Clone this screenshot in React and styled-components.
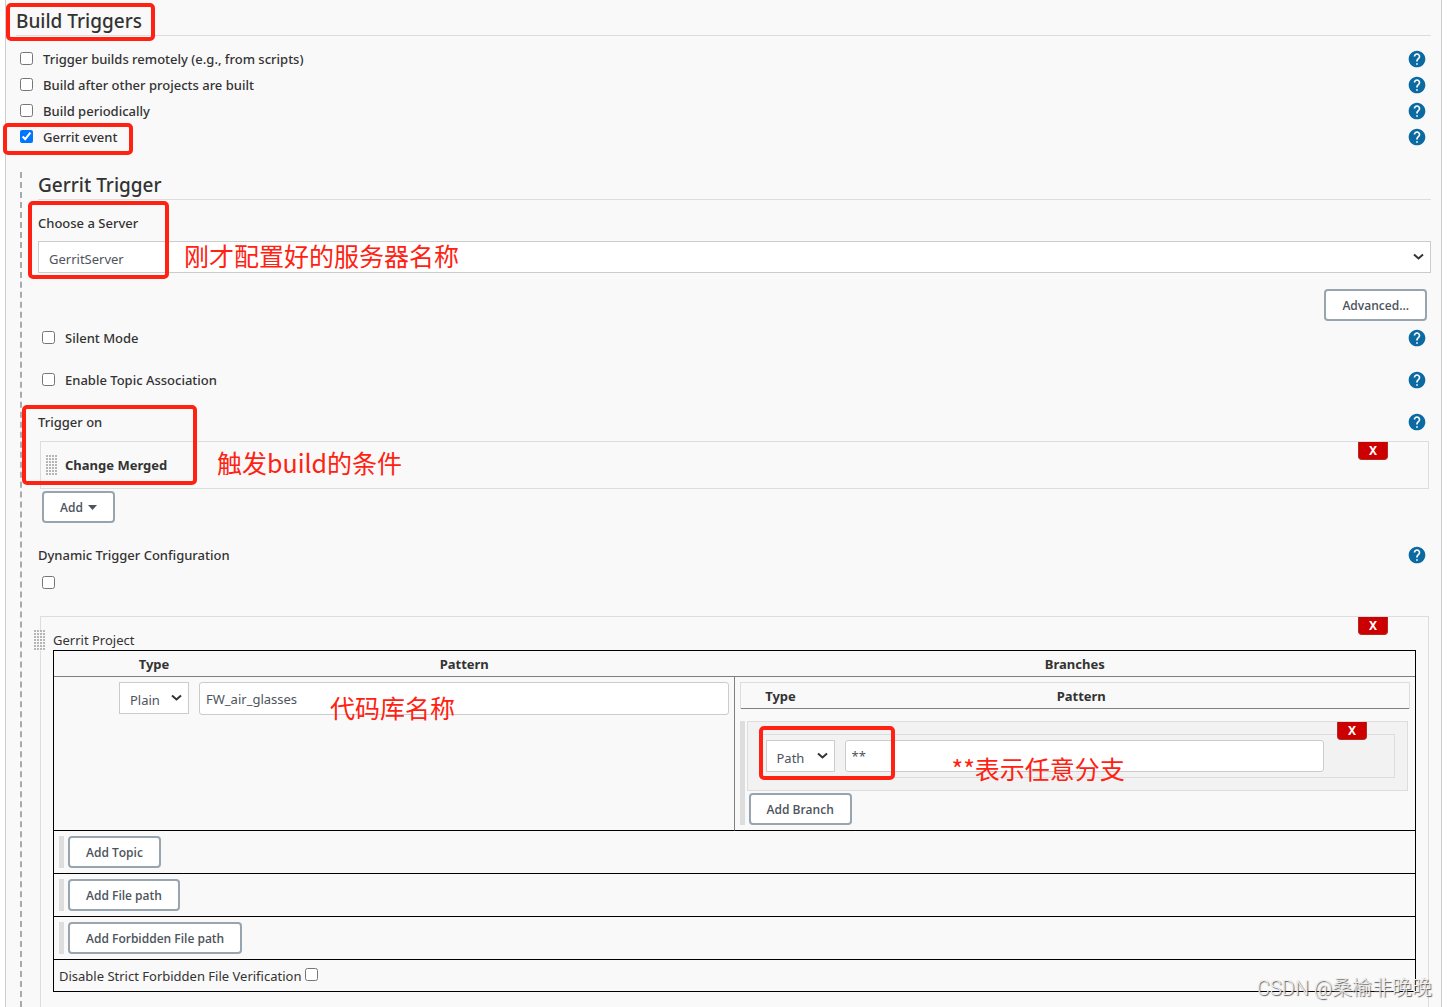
import React from "react";
import styled, { createGlobalStyle } from "styled-components";

const GlobalStyle = createGlobalStyle`
  *, *::before, *::after { box-sizing: border-box; }
  body {
    margin: 0;
    background: #fff;
    color: #333;
    font: 14px/20px "Noto Sans", "Noto Sans CJK SC", sans-serif;
  }
  input, select, button { font-family: inherit; color: inherit; margin: 0; }
`;

const Page = styled.div`
  position: relative;
  min-height: 100vh;
  display: flex;
  padding: 0 5px;
`;

const Panel = styled.main`
  flex: 1;
  display: flex;
  flex-direction: column;
  min-width: 0;
  padding: 0 10px;
  background: #f9f9f9;
  border: solid #ccc;
  border-width: 0 1px;
`;

const Heading = styled.h2`
  margin: 0;
  padding-top: ${(p) => (p.$first ? "7px" : "0")};
  border-bottom: 1px solid #ddd;
  font-size: 19px;
  line-height: ${(p) => (p.$first ? "28px" : "27px")};
  font-weight: 500;
`;

const TriggerList = styled.div`
  padding: 10px 0 22px 4px;
`;

const Row = styled.div`
  display: flex;
  align-items: center;
  justify-content: space-between;
  height: ${(p) => (p.$tall ? "24px" : "26px")};
  margin-top: ${(p) => (p.$tall ? "18px" : "0")};
  padding: 0 4px 0 ${(p) => (p.$inset ? "4px" : "0")};
`;

const Label = styled.label`
  display: flex;
  align-items: center;
  gap: 10px;
  font-size: 13px;
  line-height: 20px;
  font-weight: 500;

  input { margin-bottom: 2px; }
`;

const Check = styled.input.attrs({ type: "checkbox" })`
  width: 13px;
  height: 13px;
`;

const HelpButton = styled.button`
  display: flex;
  padding: 0 0 1px;
  border: 0;
  background: none;
  color: #0b6aa2;
`;

const Nested = styled.section`
  flex: 1;
  display: flex;
  flex-direction: column;
  margin-left: 4px;
  padding-left: 16px;
  border-left: 2px dashed #aaa;
`;

const ServerField = styled.div`
  display: flex;
  flex-direction: column;
  gap: 8px;
  padding-top: 13px;
`;

const SelectWrap = styled.div`
  position: relative;
  display: flex;
  width: ${(p) => p.$width || "100%"};
  flex: none;
`;

const SelectBox = styled.select`
  appearance: none;
  width: 100%;
  height: 32px;
  padding: 3px 24px 0 10px;
  border: 1px solid #ccc;
  border-radius: 0;
  background: #fff;
  color: #4d545d;
  font-size: 13px;
`;

const Chevron = styled.svg`
  position: absolute;
  right: 7px;
  top: 12px;
  pointer-events: none;
`;

const TextBox = styled.input.attrs({ type: "text" })`
  flex: 1;
  width: 100%;
  min-width: 0;
  height: ${(p) => (p.$low ? "32px" : "33px")};
  padding: 0 6px;
  border: 1px solid #ccc;
  border-radius: 3px;
  background: #fff;
  color: #4d545d;
  font-size: 13px;
`;

const Button = styled.button`
  display: inline-flex;
  align-items: center;
  gap: 5px;
  height: 32px;
  padding: 0 16px;
  border: 2px solid #98a5af;
  border-radius: 4px;
  background: #fff;
  color: #4d545d;
  font-family: "Open Sans", "Noto Sans", sans-serif;
  font-size: 12px;
  font-weight: 600;
  white-space: nowrap;
`;

const AdvancedBar = styled.div`
  display: flex;
  justify-content: flex-end;
  padding: 16px 4px 0;
  margin-bottom: -13px;
`;

const EventBox = styled.div`
  position: relative;
  display: flex;
  align-items: center;
  gap: 7px;
  height: 48px;
  margin: 7px 2px 2px;
  padding-left: 5px;
  border: 1px solid #ddd;
  font-size: 13px;
  font-weight: 700;
`;

const Grip = styled.span`
  width: 12px;
  height: 21px;
  background-color: #f9f9f9;
  background-image: radial-gradient(circle at 1px 1px, #aaa 0, #bbb 1px, transparent 1px);
  background-size: 3px 3px;
`;

const DeleteButton = styled.button`
  position: absolute;
  top: 0;
  right: 40px;
  width: 30px;
  height: 18px;
  padding: 0;
  border: 1px solid #b52b20;
  border-top: 0;
  border-radius: 0 0 4px 4px;
  background: #c00;
  color: #fff;
  font-size: 12px;
  line-height: 17px;
  font-weight: 700;
`;

const AddEvent = styled.div`
  padding: 0 4px;
  margin-bottom: 2px;
`;

const DynamicCheck = styled.div`
  display: flex;
  padding: 9px 4px 27px;
`;

const ProjectBox = styled.div`
  position: relative;
  flex: 1;
  margin: 0 2px;
  padding: 13px 12px 0;
  border: 1px solid #ddd;
  border-bottom: 0;
`;

const ProjectTitle = styled.div`
  display: flex;
  align-items: center;
  gap: 7px;
  height: 20px;
  margin-left: -19px;
  font-size: 13px;
`;

const ProjectTable = styled.table`
  width: 100%;
  table-layout: fixed;
  border: 1px solid #000;
  border-collapse: separate;
  border-spacing: 0;
`;

const HeadCell = styled.th`
  height: 26px;
  padding: 0;
  border-bottom: 1px solid #808080;
  font-size: 13px;
  font-weight: 700;
  text-align: center;
`;

const Cell = styled.td`
  position: relative;
  padding: 5px;
  vertical-align: top;
  border-bottom: ${(p) => (p.$last ? "0" : "1px solid #000")};
  border-right: ${(p) => (p.$divided ? "1px solid #808080" : "0")};
  font-size: 13px;
`;

const BranchTable = styled.table`
  width: 100%;
  table-layout: fixed;
  margin-bottom: 12px;
  border: 1px solid #ddd;
  border-bottom: 0;
  border-spacing: 0;
`;

const Chunk = styled.div`
  border-left: 5px solid #ddd;
  padding-left: ${(p) => (p.$branch ? "2px" : "4px")};
  padding-right: 2px;
  display: flex;
  flex-direction: column;
  align-items: flex-start;
  gap: 2px;
`;

const ChunkButton = styled.div`
  display: flex;
  padding-left: 2px;
`;

const BranchBox = styled.div`
  position: relative;
  width: 100%;
  padding: 12px;
  border: 1px solid #ddd;
  background: #f2f2f2;
`;

const BranchFields = styled.div`
  display: flex;
  gap: 10px;
  padding: 5px 70px 5px 5px;
  border: 1px solid #ddd;
`;

const StrictLabel = styled.label`
  display: flex;
  gap: 4px;
  height: 21px;
  line-height: 22px;

  input { margin-top: 3px; }
`;

const Outline = styled.div`
  position: absolute;
  left: ${(p) => p.$x}px;
  top: ${(p) => p.$y}px;
  width: ${(p) => p.$w}px;
  height: ${(p) => p.$h}px;
  border: 4px solid #ff2212;
  border-radius: 5px;
  pointer-events: none;
`;

const Note = styled.div`
  position: absolute;
  left: ${(p) => p.$x}px;
  top: ${(p) => p.$y}px;
  color: #ff2212;
  font: 400 25px/32px "Noto Sans CJK SC", sans-serif;
  white-space: nowrap;
  pointer-events: none;
`;

const Watermark = styled.div`
  position: absolute;
  right: 15px;
  bottom: 5px;
  color: #eee;
  font: 300 20px/28px Roboto, "Noto Sans CJK SC", sans-serif;
  text-shadow: 1px 1px 1px #555;
  white-space: nowrap;
`;

const Help = () => (
  <HelpButton type="button" aria-label="Help">
    <svg width="20" height="20" viewBox="0 0 24 24" fill="currentColor">
      <circle cx="12" cy="12" r="8" fill="#fff" />
      <path d="M12 2C6.48 2 2 6.48 2 12s4.48 10 10 10 10-4.48 10-10S17.52 2 12 2zm1 17h-2v-2h2v2zm2.07-7.75l-.9.92C13.45 12.9 13 13.5 13 15h-2v-.5c0-1.1.45-2.1 1.17-2.83l1.24-1.26c.37-.36.59-.86.59-1.41 0-1.1-.9-2-2-2s-2 .9-2 2H8c0-2.21 1.79-4 4-4s4 1.79 4 4c0 .88-.36 1.68-.93 2.25z" />
    </svg>
  </HelpButton>
);

const Select = ({ id, label, value, width }) => (
  <SelectWrap $width={width}>
    <SelectBox id={id} aria-label={label} defaultValue={value}>
      <option>{value}</option>
    </SelectBox>
    <Chevron width="11" height="8" viewBox="0 0 11 8" fill="none" stroke="#333" strokeWidth="2">
      <path d="M1 1.5 5.5 5.5 10 1.5" />
    </Chevron>
  </SelectWrap>
);

const CheckRow = ({ children, checked, ...rest }) => (
  <Row {...rest}>
    <Label>
      <Check defaultChecked={checked} />
      {children}
    </Label>
    <Help />
  </Row>
);

const Delete = () => (
  <DeleteButton type="button" aria-label="Delete">X</DeleteButton>
);

const AddRow = ({ children }) => (
  <tr>
    <Cell colSpan={4}>
      <Chunk>
        <Button type="button">{children}</Button>
      </Chunk>
    </Cell>
  </tr>
);

export default function App() {
  return (
    <Page>
      <GlobalStyle />
      <Panel>
        <Heading $first>Build Triggers</Heading>
        <TriggerList>
          <CheckRow>Trigger builds remotely (e.g., from scripts)</CheckRow>
          <CheckRow>Build after other projects are built</CheckRow>
          <CheckRow>Build periodically</CheckRow>
          <CheckRow checked>Gerrit event</CheckRow>
        </TriggerList>

        <Nested>
          <Heading>Gerrit Trigger</Heading>
          <ServerField>
            <Label htmlFor="server">Choose a Server</Label>
            <Select id="server" value="GerritServer" />
          </ServerField>
          <AdvancedBar>
            <Button type="button">Advanced...</Button>
          </AdvancedBar>
          <CheckRow $tall $inset>Silent Mode</CheckRow>
          <CheckRow $tall $inset>Enable Topic Association</CheckRow>
          <Row $tall>
            <Label as="span">Trigger on</Label>
            <Help />
          </Row>
          <EventBox>
            <Grip />
            Change Merged
            <Delete />
          </EventBox>
          <AddEvent>
            <Button type="button">
              Add
              <svg width="9" height="5" viewBox="0 0 9 5" fill="#4d545d">
                <path d="M0 0h9L4.5 5z" />
              </svg>
            </Button>
          </AddEvent>
          <Row $tall>
            <Label htmlFor="dynamic">Dynamic Trigger Configuration</Label>
            <Help />
          </Row>
          <DynamicCheck>
            <Check id="dynamic" />
          </DynamicCheck>

          <ProjectBox>
            <Delete />
            <ProjectTitle>
              <Grip />
              Gerrit Project
            </ProjectTitle>
            <ProjectTable>
              <colgroup>
                <col style={{ width: 60 }} />
                <col style={{ width: 80 }} />
                <col />
                <col style={{ width: "50%" }} />
              </colgroup>
              <thead>
                <tr>
                  <HeadCell />
                  <HeadCell>Type</HeadCell>
                  <HeadCell>Pattern</HeadCell>
                  <HeadCell>Branches</HeadCell>
                </tr>
              </thead>
              <tbody>
                <tr>
                  <Cell />
                  <Cell>
                    <Select label="Project type" value="Plain" width="70px" />
                  </Cell>
                  <Cell $divided>
                    <TextBox aria-label="Project pattern" defaultValue="FW_air_glasses" />
                  </Cell>
                  <Cell>
                    <BranchTable>
                      <colgroup>
                        <col style={{ width: 80 }} />
                        <col />
                        <col style={{ width: 67 }} />
                      </colgroup>
                      <thead>
                        <tr>
                          <HeadCell>Type</HeadCell>
                          <HeadCell>Pattern</HeadCell>
                          <HeadCell />
                        </tr>
                      </thead>
                    </BranchTable>
                    <Chunk $branch>
                      <BranchBox>
                        <BranchFields>
                          <Select label="Branch type" value="Path" width="69px" />
                          <TextBox $low aria-label="Branch pattern" defaultValue="**" />
                        </BranchFields>
                        <Delete />
                      </BranchBox>
                      <ChunkButton>
                        <Button type="button">Add Branch</Button>
                      </ChunkButton>
                    </Chunk>
                    <Outline $x={24} $y={49} $w={136} $h={54} />
                    <Note $x={217} $y={75}>**表示任意分支</Note>
                  </Cell>
                </tr>
                <AddRow>Add Topic</AddRow>
                <AddRow>Add File path</AddRow>
                <AddRow>Add Forbidden File path</AddRow>
                <tr>
                  <Cell $last colSpan={4}>
                    <StrictLabel>
                      Disable Strict Forbidden File Verification
                      <Check />
                    </StrictLabel>
                  </Cell>
                </tr>
              </tbody>
            </ProjectTable>
          </ProjectBox>
        </Nested>
      </Panel>

      <Outline $x={6} $y={3} $w={149} $h={38} />
      <Outline $x={3} $y={123} $w={130} $h={32} />
      <Outline $x={28} $y={201} $w={141} $h={78} />
      <Outline $x={22} $y={405} $w={175} $h={80} />
      <Note $x={184} $y={239}>刚才配置好的服务器名称</Note>
      <Note $x={217} $y={446}>触发build的条件</Note>
      <Note $x={330} $y={691}>代码库名称</Note>
      <Watermark>CSDN @桑榆非晚晚</Watermark>
    </Page>
  );
}
